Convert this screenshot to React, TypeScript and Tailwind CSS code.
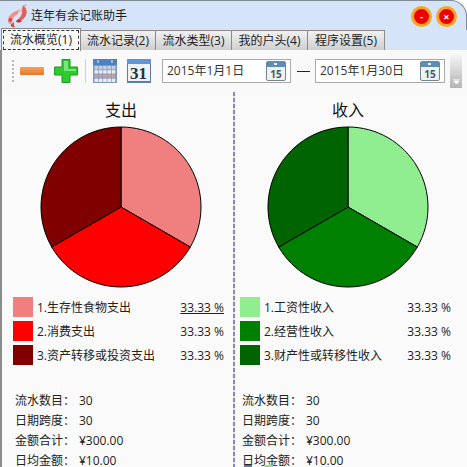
const font = { fontFamily: '"Open Sans", "Noto Sans CJK SC", sans-serif' };

type LegendItem = { color: string; label: string; percent: string; underline?: boolean };

const expense: LegendItem[] = [
  { color: "#f08080", label: "1.生存性食物支出", percent: "33.33 %", underline: true },
  { color: "#ff0000", label: "2.消费支出", percent: "33.33 %" },
  { color: "#800000", label: "3.资产转移或投资支出", percent: "33.33 %" },
];

const income: LegendItem[] = [
  { color: "#90ee90", label: "1.工资性收入", percent: "33.33 %" },
  { color: "#008000", label: "2.经营性收入", percent: "33.33 %" },
  { color: "#006400", label: "3.财产性或转移性收入", percent: "33.33 %" },
];

const stats = [
  ["流水数目：", "30"],
  ["日期跨度：", "30"],
  ["金额合计：", "¥300.00"],
  ["日均金额：", "¥10.00"],
];

const tabs = [
  { label: "流水记录(2)", width: "w-[75px]" },
  { label: "流水类型(3)", width: "w-[76px]" },
  { label: "我的户头(4)", width: "w-[76px]" },
  { label: "程序设置(5)", width: "w-[77px]" },
];

function Pie({ colors }: { colors: string[] }) {
  return (
    <svg width="162" height="162" viewBox="0 0 162 162">
      <path d="M81 81 L81 1 A80 80 0 0 1 150.28 121 Z" fill={colors[0]} stroke="#000" />
      <path d="M81 81 L150.28 121 A80 80 0 0 1 11.72 121 Z" fill={colors[1]} stroke="#000" />
      <path d="M81 81 L11.72 121 A80 80 0 0 1 81 1 Z" fill={colors[2]} stroke="#000" />
    </svg>
  );
}

function FishLogo() {
  return (
    <svg width="24" height="24" viewBox="0 0 24 24">
      {/* left fish */}
      <path d="M14 6 C9 7 4 11 3 15 C2.5 18 4 20 6 20 C6 16 9 12 13 10 Z" fill="#ee8f88" />
      <path d="M6 20 C5 22 7 24 10 23 C8.5 21.5 9 19.5 9 18 Z" fill="#d9453f" />
      <circle cx="5.5" cy="16" r="2" fill="#dd4a44" />
      <path d="M14 6 L17 4 L15 9 Z" fill="#f3b4ae" />
      {/* right fish */}
      <path d="M18 1 C22 4 23 9 20 13 C18 16 14 18 11 17 C14 15 17 12 17 8 C17 6 17.5 3 18 1 Z" fill="#e2605a" />
      <path d="M11 17 C12 19 15 19 17 17 L14 15 Z" fill="#c8322e" />
      <path d="M18 1 L22 0 L20 4 Z" fill="#f0a8a2" />
    </svg>
  );
}

function DateIcon() {
  return (
    <svg width="20" height="20" viewBox="0 0 20 20">
      <rect x="0.5" y="0.5" width="19" height="19" rx="1.5" fill="#eef2f4" stroke="#74858f" />
      <rect x="1" y="1" width="18" height="5" fill="#5b8db5" />
      <rect x="8" y="2" width="3" height="2" fill="#e8f0f6" />
      <text x="10" y="16.5" textAnchor="middle" fontSize="10" fontWeight="700" fill="#4b5a63" fontFamily="Open Sans">
        15
      </text>
    </svg>
  );
}

function GridCalendarIcon() {
  const rows = [0, 1, 2, 3];
  const cols = [0, 1, 2, 3, 4];
  return (
    <svg width="24" height="24" viewBox="0 0 24 24">
      <rect width="24" height="24" fill="#7f98bd" />
      <rect width="24" height="6" fill="#4f80c4" />
      <rect x="4" y="1" width="2" height="3" fill="#9fbce4" />
      <rect x="18" y="1" width="2" height="3" fill="#9fbce4" />
      {rows.map((r) =>
        cols.map((c) => (
          <rect
            key={`${r}-${c}`}
            x={1.5 + c * 4.3}
            y={7 + r * 4.2}
            width="3.6"
            height="3.4"
            fill={r === 2 ? "#c9a0a0" : r === 0 ? "#c3cfe0" : "#e9edf3"}
          />
        )),
      )}
    </svg>
  );
}

function DayCalendarIcon() {
  return (
    <svg width="24" height="24" viewBox="0 0 24 24">
      <rect width="24" height="24" fill="#5d7ca6" />
      <rect width="24" height="5" fill="#5f95d8" />
      <rect x="1" y="5" width="22" height="17" fill="#eef1f5" />
      <text x="11.5" y="20" textAnchor="middle" fontSize="17" fontWeight="700" fill="#26303c" fontFamily="Liberation Serif">
        31
      </text>
    </svg>
  );
}

function DateBox({ value, width }: { value: string; width: string }) {
  return (
    <div className={`flex h-[24px] ${width} items-center justify-between border border-[#a9a9a9] bg-white pl-[4px] pr-[4px] text-[12px] text-[#333]`}>
      <span>{value}</span>
      <DateIcon />
    </div>
  );
}

function Column({
  title,
  colors,
  items,
  pieLeft,
  rowLeft,
  statLeft,
}: {
  title: string;
  colors: string[];
  items: LegendItem[];
  pieLeft: string;
  rowLeft: string;
  statLeft: string;
}) {
  return (
    <div className="flex flex-col">
      <div className={pieLeft}>
        <div className="flex h-[34px] w-[162px] items-center justify-center pt-[2px] text-[16px] text-[#111]">{title}</div>
        <Pie colors={colors} />
      </div>
      <div className={`mt-[9px] flex w-[211px] flex-col gap-[4px] ${rowLeft}`}>
        {items.map((item) => (
          <div key={item.label} className="flex h-[20px] items-center text-[12px] text-[#222]">
            <span className="mr-[4px] h-[20px] w-[20px]" style={{ backgroundColor: item.color }} />
            <span className="flex-1 whitespace-nowrap pt-px">{item.label}</span>
            <span className={`pt-px ${item.underline ? "underline" : ""}`}>{item.percent}</span>
          </div>
        ))}
      </div>
      <div className={`mt-[25px] flex flex-col ${statLeft}`}>
        {stats.map(([name, value]) => (
          <div key={name} className="flex h-[20px] items-center pt-[2px] text-[12px] leading-[12px] text-[#222]">
            <span className="w-[64px] whitespace-nowrap">{name}</span>
            <span>{value}</span>
          </div>
        ))}
      </div>
    </div>
  );
}

export default function App() {
  return (
    <div className="relative h-[467px] w-[467px] overflow-hidden bg-white" style={font}>
      {/* title bar */}
      <div className="flex h-[30px] items-center rounded-tr-[16px] border-t border-r border-[#7f8a99] bg-[#d6e4fa] pl-[5px]">
        <FishLogo />
        <span className="ml-[2px] text-[12px] text-[#1a1a1a]">连年有余记账助手</span>
        <div className="ml-auto mt-[1px] flex gap-[4px] pr-[9px]">
          <div className="flex h-[21px] w-[21px] items-center justify-center rounded-full border-[3px] border-[#f5a623] bg-[#ee0000] text-[10px] font-bold leading-none text-white">
            -
          </div>
          <div className="flex h-[21px] w-[21px] items-center justify-center rounded-full border-[3px] border-[#f5a623] bg-[#ee0000] text-[11px] font-bold leading-none text-white">
            ×
          </div>
        </div>
      </div>

      {/* tabs */}
      <div className="relative flex h-[20px] items-end bg-[#d6e4fa] pl-[2px]">
        <div className="absolute left-[1px] top-[-2px] z-10 flex h-[23px] w-[80px] items-center justify-center border border-b-0 border-[#8b8b8b] bg-[#fafafa] text-[12px] text-[#222]">
          <span className="flex h-[20px] w-[76px] items-center justify-center border border-dashed border-[#333]">流水概览(1)</span>
        </div>
        <div className="ml-[79px] flex">
          {tabs.map((tab) => (
            <div
              key={tab.label}
              className={`flex h-[20px] ${tab.width} items-center justify-center border border-b-0 border-l-0 border-[#8b8b8b] bg-gradient-to-b from-[#f1f1f1] to-[#cfcfcf] text-[12px] text-[#222]`}
            >
              {tab.label}
            </div>
          ))}
        </div>
      </div>

      {/* toolbar */}
      <div className="flex h-[42px] items-center border-l-2 border-[#8b8b8b] bg-[#f9f9f9] pl-[10px]">
        <div className="h-[22px] w-[2px] border-l-2 border-dotted border-[#b8b8b8]" />
        <div className="ml-[6px] h-[8px] w-[24px] rounded-[1px] bg-gradient-to-b from-[#f7a25e] to-[#e8742a]" />
        <svg className="ml-[10px]" width="24" height="24" viewBox="0 0 24 24">
          <path d="M8 0.5 H16 V8 H23.5 V16 H16 V23.5 H8 V16 H0.5 V8 H8 Z" fill="#2ecb2e" stroke="#1c9a1c" strokeWidth="1" strokeLinejoin="round" />
          <path d="M10 2 H14 V10 H22 V12 H10 Z" fill="#7fe47f" />
        </svg>
        <div className="ml-[7px] h-[24px] w-px bg-[#cfd3d8]" />
        <div className="ml-[7px]">
          <GridCalendarIcon />
        </div>
        <div className="ml-[10px]">
          <DayCalendarIcon />
        </div>
        <div className="ml-[11px]">
          <DateBox value="2015年1月1日" width="w-[129px]" />
        </div>
        <div className="ml-[6px] h-px w-[13px] bg-[#222]" />
        <div className="ml-[5px]">
          <DateBox value="2015年1月30日" width="w-[130px]" />
        </div>
        <div className="relative ml-[5px] h-[33px] w-[12px] bg-gradient-to-b from-[#f4f4f4] to-[#b5b5b5]">
          <svg className="absolute bottom-[3px] left-[3px]" width="7" height="6" viewBox="0 0 7 6">
            <path d="M0 0 H7 M1 2 H6 L3.5 5 Z" stroke="#fff" fill="#fff" />
          </svg>
        </div>
      </div>

      {/* charts */}
      <div className="grid h-[375px] grid-cols-[231px_2px_232px] border-l-2 border-[#8b8b8b] bg-[#fafafa]">
        <Column
          title="支出"
          colors={["#f08080", "#ff0000", "#800000"]}
          items={expense}
          pieLeft="pl-[38px]"
          rowLeft="ml-[11px]"
          statLeft="pl-[13px]"
        />
        <div className="bg-[repeating-linear-gradient(to_bottom,#8484d8_0,#8484d8_4px,#e6ecb0_4px,#e6ecb0_6px)]" />
        <Column
          title="收入"
          colors={["#90ee90", "#008000", "#006400"]}
          items={income}
          pieLeft="pl-[32px]"
          rowLeft="ml-[5px]"
          statLeft="pl-[7px]"
        />
      </div>

      {/* icons of the next row, cut off by the window edge */}
      <div className="absolute bottom-0 left-[244px] h-[2px] w-[8px] bg-[#3f7fc4]" />
      <div className="absolute bottom-0 left-[264px] h-[2px] w-[9px] bg-[#b5d86a]" />
    </div>
  );
}
